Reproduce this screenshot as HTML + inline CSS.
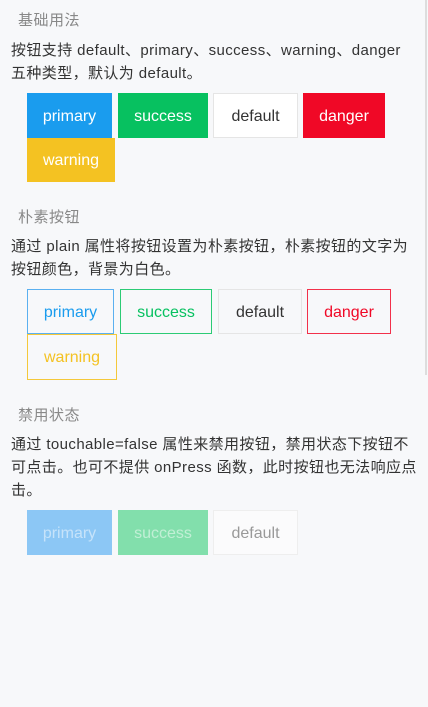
<!DOCTYPE html>
<html><head><meta charset="utf-8"><style>
body{margin:0;width:428px;height:707px;background:#f7f8fa;font-family:"Liberation Sans","Noto Sans CJK SC",sans-serif;position:relative;overflow:hidden}
.t{position:absolute;left:18px;font-size:15px;color:#888;line-height:20px;letter-spacing:0.5px}
.d{position:absolute;left:11px;font-size:15px;color:#333;line-height:23px;width:417px;letter-spacing:0.4px;white-space:nowrap}
.b{position:absolute;height:45px;box-sizing:border-box;display:flex;align-items:center;justify-content:center;font-size:16px;color:#fff;padding-top:2px}
.sb{position:absolute;right:1px;top:0;width:2px;height:375px;background:#ddd}
</style></head><body>
<div class="t" style="top:11px">基础用法</div>
<div class="d" style="top:39px">按钮支持 default、primary、success、warning、danger<br>五种类型，默认为 default。</div>
<div class="b" style="left:27px;top:93px;width:85px;background:#1a9cee">primary</div>
<div class="b" style="left:118px;top:93px;width:90px;background:#07c160">success</div>
<div class="b" style="left:213px;top:93px;width:85px;background:#fff;border:1px solid #e5e5e5;color:#333">default</div>
<div class="b" style="left:303px;top:93px;width:82px;background:#f00826">danger</div>
<div class="b" style="left:27px;top:138px;width:88px;height:44px;background:#f4c222">warning</div>

<div class="t" style="top:208px">朴素按钮</div>
<div class="d" style="top:235px">通过 plain 属性将按钮设置为朴素按钮，朴素按钮的文字为<br>按钮颜色，背景为白色。</div>
<div class="b" style="left:27px;top:289px;width:87px;border:1px solid #5ab0f0;color:#1a9cee">primary</div>
<div class="b" style="left:120px;top:289px;width:92px;border:1px solid #2ccb75;color:#07c160">success</div>
<div class="b" style="left:218px;top:289px;width:84px;border:1px solid #e5e5e5;color:#333">default</div>
<div class="b" style="left:307px;top:289px;width:84px;border:1px solid #f2304a;color:#f00826">danger</div>
<div class="b" style="left:27px;top:334px;width:90px;height:46px;border:1px solid #f4c83a;color:#f4c222">warning</div>

<div class="t" style="top:406px">禁用状态</div>
<div class="d" style="top:433px">通过 touchable=false 属性来禁用按钮，禁用状态下按钮不<br>可点击。也可不提供 onPress 函数，此时按钮也无法响应点<br>击。</div>
<div class="b" style="left:27px;top:510px;width:85px;background:#8cc7f5;color:#c6e3fa">primary</div>
<div class="b" style="left:118px;top:510px;width:90px;background:#82dfac;color:#c1efd5">success</div>
<div class="b" style="left:213px;top:510px;width:85px;background:#fbfbfc;border:1px solid #eee;color:#999">default</div>
<div class="sb"></div>
</body></html>
